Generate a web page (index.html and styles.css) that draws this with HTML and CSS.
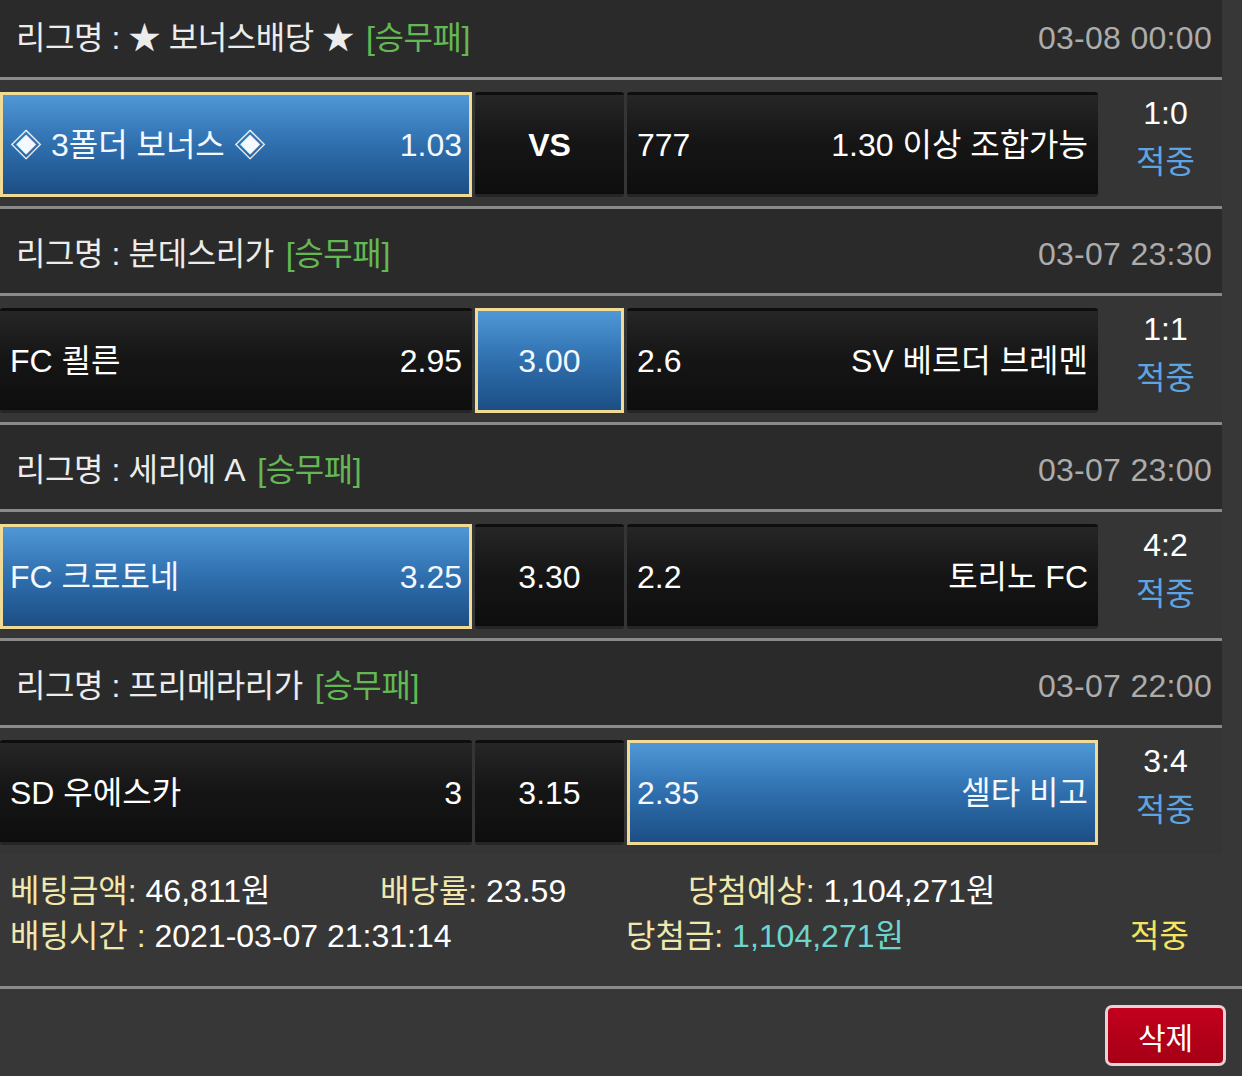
FILE: index.html
```html
<!DOCTYPE html>
<html lang="ko">
<head>
<meta charset="utf-8">
<title>베팅내역</title>
<link rel="stylesheet" href="styles.css">
</head>
<body>
<div class="page">
  <div class="list">
    <section class="game">
      <div class="league">
        <span class="lname">리그명 : ★ 보너스배당 ★</span>
        <span class="ltype">[승무패]</span>
        <span class="ldate">03-08 00:00</span>
      </div>
      <div class="match">
        <div class="cell side sel"><span>◈ 3폴더 보너스 ◈</span><span>1.03</span></div>
        <div class="cell draw"><b class="vs">VS</b></div>
        <div class="cell side"><span>777</span><span>1.30 이상 조합가능</span></div>
        <div class="score"><span>1:0</span><span class="hit">적중</span></div>
      </div>
    </section>
    <section class="game">
      <div class="league">
        <span class="lname">리그명 : 분데스리가</span>
        <span class="ltype">[승무패]</span>
        <span class="ldate">03-07 23:30</span>
      </div>
      <div class="match">
        <div class="cell side"><span>FC 쾰른</span><span>2.95</span></div>
        <div class="cell draw sel"><span>3.00</span></div>
        <div class="cell side"><span>2.6</span><span>SV 베르더 브레멘</span></div>
        <div class="score"><span>1:1</span><span class="hit">적중</span></div>
      </div>
    </section>
    <section class="game">
      <div class="league">
        <span class="lname">리그명 : 세리에 A</span>
        <span class="ltype">[승무패]</span>
        <span class="ldate">03-07 23:00</span>
      </div>
      <div class="match">
        <div class="cell side sel"><span>FC 크로토네</span><span>3.25</span></div>
        <div class="cell draw"><span>3.30</span></div>
        <div class="cell side"><span>2.2</span><span>토리노 FC</span></div>
        <div class="score"><span>4:2</span><span class="hit">적중</span></div>
      </div>
    </section>
    <section class="game">
      <div class="league">
        <span class="lname">리그명 : 프리메라리가</span>
        <span class="ltype">[승무패]</span>
        <span class="ldate">03-07 22:00</span>
      </div>
      <div class="match">
        <div class="cell side"><span>SD 우에스카</span><span>3</span></div>
        <div class="cell draw"><span>3.15</span></div>
        <div class="cell side sel"><span>2.35</span><span>셀타 비고</span></div>
        <div class="score"><span>3:4</span><span class="hit">적중</span></div>
      </div>
    </section>
  </div>

  <div class="summary">
    <div class="srow">
      <span class="item w1"><span class="lbl">베팅금액:</span> 46,811원</span>
      <span class="item w2"><span class="lbl">배당률:</span> 23.59</span>
      <span class="item"><span class="lbl">당첨예상:</span> 1,104,271원</span>
    </div>
    <div class="srow">
      <span class="item w3"><span class="lbl">배팅시간 :</span> 2021-03-07 21:31:14</span>
      <span class="item w4"><span class="lbl">당첨금:</span> <span class="win">1,104,271원</span></span>
      <span class="item result">적중</span>
    </div>
  </div>

  <div class="actions">
    <button class="del" type="button">삭제</button>
  </div>
</div>
</body>
</html>
```

FILE: styles.css
```css
html, body {
  margin: 0;
  padding: 0;
  background: #373737;
}

body {
  font-family: "Liberation Sans", "Noto Sans CJK KR", sans-serif;
  font-size: 32px;
  line-height: 40px;
  color: #ffffff;
  overflow: hidden;
}

.page {
  margin-top: -7px;
  width: 1242px;
}

.list {
  width: 1222px;
}

.game + .game {
  border-top: 3px solid #8a8a8a;
}

.league {
  display: flex;
  align-items: center;
  padding: 6px 10px 0 16px;
  background: #2a2a2a;
  border-bottom: 3px solid #8a8a8a;
  box-sizing: border-box;
  height: 87px;
}

.lname {
  color: #ececec;
  letter-spacing: -0.4px;
}

.ltype {
  color: #63b853;
  margin-left: 12px;
  letter-spacing: -0.4px;
}

.ldate {
  margin-left: auto;
  color: #acacac;
  letter-spacing: 0.3px;
}

.match {
  display: grid;
  grid-template-columns: 472px 149px 471px 1fr;
  column-gap: 3px;
  padding: 12px 0 9px;
  background: #353535;
}

.cell {
  height: 105px;
  box-sizing: border-box;
  border: 3px solid transparent;
  border-radius: 3px;
  background: linear-gradient(#262626, #161616 45%, #0e0e0e);
  display: flex;
  align-items: center;
  padding: 0 7px;
  color: #ffffff;
}

.cell.side {
  justify-content: space-between;
}

.cell.draw {
  justify-content: center;
}

.cell.sel {
  border-color: #f1da93;
  border-radius: 0;
  background: linear-gradient(#4f97d6, #2f6fae 50%, #1c4e84);
  color: #f4f8ff;
}

.vs {
  font-weight: bold;
}

.score {
  display: flex;
  flex-direction: column;
  align-items: center;
  align-self: start;
  margin-top: -2px;
  padding-left: 8px;
  line-height: 46px;
}

.hit {
  color: #5ea4e0;
  margin-top: 3px;
}

.summary {
  padding: 14px 10px 28px;
  border-bottom: 3px solid #8a8a8a;
}

.srow {
  display: flex;
  height: 45px;
  align-items: center;
  white-space: nowrap;
}

.item {
  color: #ffffff;
}

.w1 { width: 370px; }
.w2 { width: 308px; }
.w3 { width: 616px; }
.w4 { width: 504px; }

.lbl {
  color: #f1e8ae;
}

.win {
  color: #6dd5cc;
}

.result {
  color: #f6e35f;
}

.actions {
  display: flex;
  justify-content: flex-end;
  padding: 16px 16px 0 0;
}

.del {
  width: 121px;
  height: 61px;
  box-sizing: border-box;
  border: 3px solid #e6d2d4;
  border-radius: 7px;
  background: linear-gradient(#c2001d, #a50016);
  color: #ffffff;
  font-family: "Liberation Sans", "Noto Sans CJK KR", sans-serif;
  font-size: 30px;
  padding: 0;
}
```
